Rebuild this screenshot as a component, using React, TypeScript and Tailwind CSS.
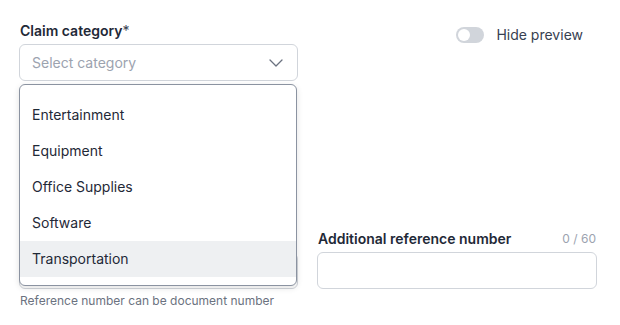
import React from "react";

const items = ["Entertainment", "Equipment", "Office Supplies", "Software", "Transportation"];

export default function App() {
  return (
    <div
      className="relative w-[620px] h-[325px] bg-white overflow-hidden"
      style={{ fontFamily: "Inter, 'Noto Sans', sans-serif" }}
    >
      <div className="pl-[19px] pr-[23px] pt-[21px]">
        <div className="grid grid-cols-[279px_279px] gap-x-[20px]">
          <div className="flex flex-col">
            <div className="h-[20px] leading-[20px] text-[14px] font-semibold text-[#1f2937] pl-[1px]">
              Claim category<span className="font-normal text-[#374151]">*</span>
            </div>
            <div className="mt-[3px] h-[37px] rounded-[6px] border border-[#d1d5db] flex items-center justify-between pl-[12px] pr-[9px]">
              <span className="text-[14px] text-[#9ca3af]">Select category</span>
              <svg width="24" height="24" viewBox="0 0 24 24" fill="none" stroke="#6b7280" strokeWidth="1.3" strokeLinecap="round" strokeLinejoin="round">
                <path d="m6 9 6 6 6-6" />
              </svg>
            </div>
          </div>
          <div className="flex justify-end items-start pt-[4px] pr-[14px]">
            <div className="flex items-center gap-[12px]">
              <div className="w-[28px] h-[16px] rounded-full bg-[#d1d5db] flex items-center px-[2px]">
                <div className="w-[12px] h-[12px] rounded-full bg-white" />
              </div>
              <span className="text-[14px] leading-[20px] text-[#374151]">Hide preview</span>
            </div>
          </div>
        </div>

        <div className="mt-[148px] grid grid-cols-[279px_280px] gap-x-[19px]">
          <div className="flex flex-col">
            <div className="h-[20px] leading-[20px] text-[14px] font-semibold text-[#1f2937] pl-[1px]">
              Reference number
            </div>
            <div className="mt-[4px] h-[36px] rounded-[6px] border border-[#d1d5db]" />
            <div className="mt-[4px] text-[12px] leading-[16px] text-[#6b7280] pl-[1px]">
              Reference number can be document number
            </div>
          </div>
          <div className="flex flex-col">
            <div className="flex items-center justify-between h-[20px]">
              <span className="text-[14px] leading-[20px] font-semibold text-[#1f2937] pl-[1px]">
                Additional reference number
              </span>
              <span className="text-[12px] text-[#9ca3af] pr-[1px]">0 / 60</span>
            </div>
            <div className="mt-[3px] h-[37px] rounded-[6px] border border-[#d1d5db]" />
          </div>
        </div>
      </div>

      <div className="absolute left-[19px] top-[84px] w-[278px] rounded-[6px] border border-[#8b93a1] bg-white pt-[12px] pb-[8px] shadow-[0_2px_6px_rgba(0,0,0,0.12)] overflow-hidden">
        {items.map((it) => (
          <div
            key={it}
            className={`h-[36px] flex items-center px-[12px] pb-[1px] text-[14px] text-[#1f2937] ${
              it === "Transportation" ? "bg-[#eef0f2]" : ""
            }`}
          >
            {it}
          </div>
        ))}
      </div>
    </div>
  );
}
